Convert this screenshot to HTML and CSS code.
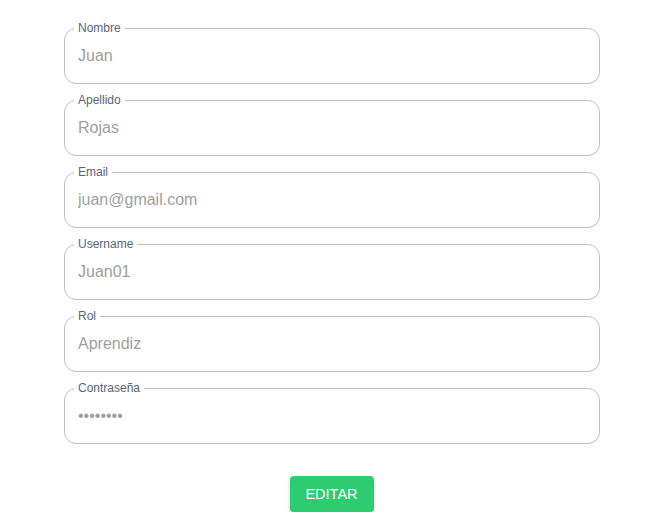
FILE: index.html
```html
<!DOCTYPE html>
<html lang="es">
<head>
<meta charset="utf-8">
<title>Editar usuario</title>
<link rel="stylesheet" href="styles.css">
</head>
<body>
<form class="form">
  <fieldset class="field"><legend class="label">Nombre</legend><input class="value" type="text" value="Juan"></fieldset>
  <fieldset class="field"><legend class="label">Apellido</legend><input class="value" type="text" value="Rojas"></fieldset>
  <fieldset class="field"><legend class="label">Email</legend><input class="value" type="text" value="juan@gmail.com"></fieldset>
  <fieldset class="field"><legend class="label">Username</legend><input class="value" type="text" value="Juan01"></fieldset>
  <fieldset class="field"><legend class="label">Rol</legend><input class="value" type="text" value="Aprendiz"></fieldset>
  <fieldset class="field"><legend class="label">Contraseña</legend><input class="value" type="password" value="12345678"></fieldset>
  <div class="actions"><button type="button" class="btn">EDITAR</button></div>
</form>
</body>
</html>
```
FILE: styles.css
```css
html, body {
  margin: 0;
  padding: 0;
  background: #fff;
}
body {
  font-family: "Liberation Sans", Arial, sans-serif;
}
.form {
  width: 536px;
  margin: 21px 0 0 64px;
  display: flex;
  flex-direction: column;
  gap: 9px;
}
.field {
  margin: 0;
  padding: 0 9px 7px 9px;
  border: 1px solid #bdbdbd;
  border-radius: 12px;
  min-width: 0;
}
.label {
  padding: 0 4px;
  font-family: "Liberation Sans", Arial, sans-serif;
  font-size: 12px;
  line-height: 14px;
  color: #56657a;
}
.value {
  display: block;
  width: 100%;
  box-sizing: border-box;
  height: 41px;
  border: 0;
  outline: none;
  padding: 1px 4px 0 4px;
  margin: 0;
  background: transparent;
  font-family: "Liberation Sans", Arial, sans-serif;
  font-size: 16px;
  color: #9e9e9e;
}
.actions {
  display: flex;
  justify-content: center;
  margin-top: 23px;
  padding-right: 1px;
}
.btn {
  width: 84px;
  height: 36px;
  border: 0;
  border-radius: 4px;
  background: #2ecc71;
  color: #fff;
  font-family: "Liberation Sans", Arial, sans-serif;
  font-size: 14.5px;
  box-shadow: 0 2px 3px rgba(0,0,0,0.25);
  cursor: pointer;
}
```
